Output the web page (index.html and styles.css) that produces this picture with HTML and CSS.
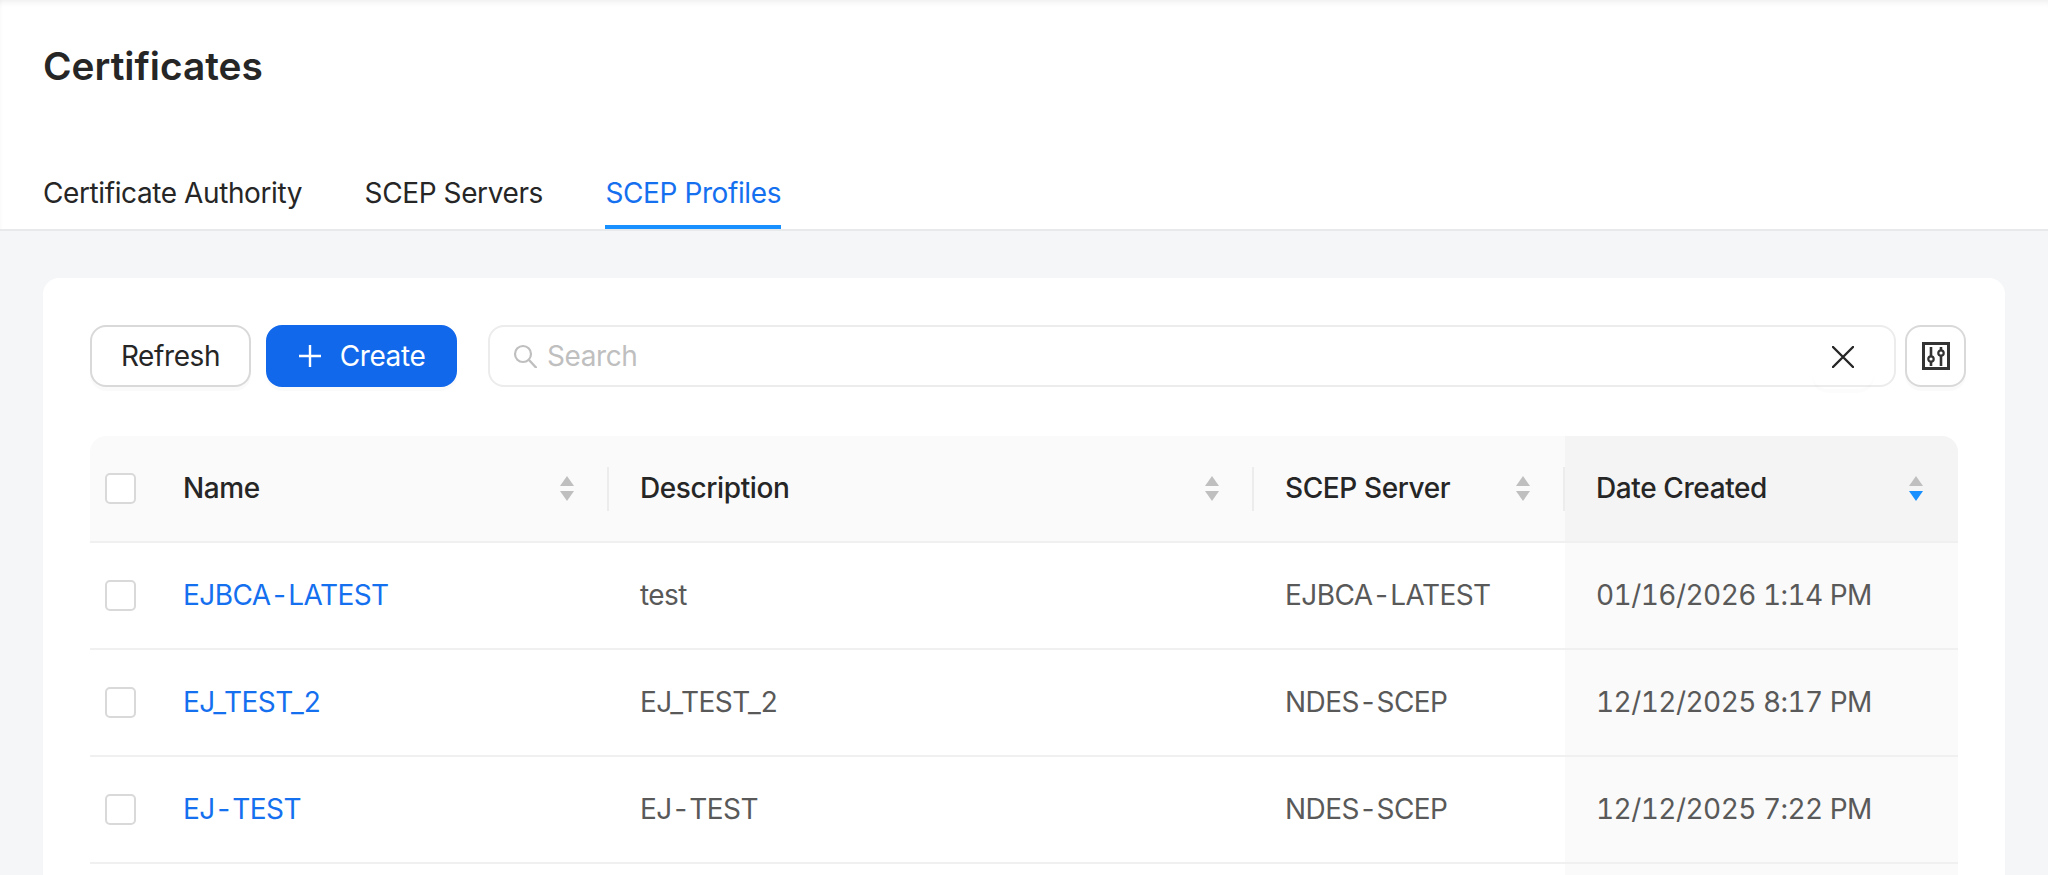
FILE: index.html
```html
<!DOCTYPE html>
<html lang="en">
<head>
<meta charset="utf-8">
<title>Certificates</title>
<link rel="stylesheet" href="styles.css">
</head>
<body>
<header class="head">
  <h1 class="title">Certificates</h1>
  <nav class="tabs">
    <a class="tab">Certificate Authority</a>
    <a class="tab">SCEP Servers</a>
    <a class="tab active">SCEP Profiles</a>
  </nav>
</header>
<main class="main">
  <section class="card">
    <div class="toolbar">
      <button class="btn">Refresh</button>
      <button class="btn primary">
        <svg class="plus" viewBox="0 0 24 24" width="24" height="24"><path d="M12 1v22M1 12h22" fill="none" stroke="#fff" stroke-width="2.4"/></svg>
        Create
      </button>
      <div class="search">
        <svg class="mag" viewBox="0 0 24 24" width="24" height="24"><circle cx="10" cy="10" r="8" fill="none" stroke="#bfbfbf" stroke-width="2.2"/><path d="M16 16l7 7.500" fill="none" stroke="#bfbfbf" stroke-width="2.4" stroke-linecap="round"/></svg>
        <span class="placeholder">Search</span>
        <span class="clear"><svg viewBox="0 0 22 22" width="22" height="22"><path d="M1 1l20 20M21 1L1 21" fill="none" stroke="#262626" stroke-width="2.4" stroke-linecap="round"/></svg></span>
      </div>
      <button class="btn icon">
        <svg viewBox="0 0 28 28" width="28" height="28"><rect x="1.500" y="1.500" width="25" height="25" fill="none" stroke="#333" stroke-width="3"/><path d="M9 5v9M9 20v4M19 5v3M19 14v10" fill="none" stroke="#333" stroke-width="2.600"/><circle cx="9" cy="17" r="2.700" fill="none" stroke="#333" stroke-width="2.200"/><circle cx="19" cy="11" r="2.700" fill="none" stroke="#333" stroke-width="2.200"/></svg>
      </button>
    </div>
    <div class="table">
      <div class="row header">
        <div class="cell select"><span class="check"></span></div>
        <div class="cell sep">Name<span class="sort"><i class="up"></i><i class="down"></i></span></div>
        <div class="cell sep">Description<span class="sort"><i class="up"></i><i class="down"></i></span></div>
        <div class="cell sep">SCEP Server<span class="sort"><i class="up"></i><i class="down"></i></span></div>
        <div class="cell date">Date Created<span class="sort"><i class="up"></i><i class="down on"></i></span></div>
      </div>
      <div class="row">
        <div class="cell select"><span class="check"></span></div>
        <div class="cell"><a class="link">EJBCA-LATEST</a></div>
        <div class="cell">test</div>
        <div class="cell">EJBCA-LATEST</div>
        <div class="cell date">01/16/2026 1:14 PM</div>
      </div>
      <div class="row">
        <div class="cell select"><span class="check"></span></div>
        <div class="cell"><a class="link">EJ_TEST_2</a></div>
        <div class="cell">EJ_TEST_2</div>
        <div class="cell">NDES-SCEP</div>
        <div class="cell date">12/12/2025 8:17 PM</div>
      </div>
      <div class="row">
        <div class="cell select"><span class="check"></span></div>
        <div class="cell"><a class="link">EJ-TEST</a></div>
        <div class="cell">EJ-TEST</div>
        <div class="cell">NDES-SCEP</div>
        <div class="cell date">12/12/2025 7:22 PM</div>
      </div>
      <div class="row">
        <div class="cell select"></div>
        <div class="cell"></div>
        <div class="cell"></div>
        <div class="cell"></div>
        <div class="cell date"></div>
      </div>
    </div>
  </section>
</main>
</body>
</html>
```
FILE: styles.css
```css
* { box-sizing: border-box; }
html, body { margin: 0; height: 875px; overflow: hidden; }
body { background: #f5f6f8; font-family: Inter, "Liberation Sans", sans-serif; color: #262626; font-size: 28px; letter-spacing: -.4px; }

.head {
  height: 231px;
  background: #fff;
  border-bottom: 2px solid #e8e9eb;
  padding: 44px 43px 0;
  box-shadow: inset 0 7px 6px -5px rgba(0,0,0,.07), inset 5px 0 5px -5px rgba(0,0,0,.04);
  display: flex;
  flex-direction: column;
  justify-content: space-between;
}
.title { margin: 0; font-size: 38.8px; line-height: 44px; font-weight: 600; color: #262626; letter-spacing: 0; }
.tabs { display: flex; gap: 62.500px; }
.tab { display: block; height: 70px; padding-top: 16px; line-height: 36px; font-size: 28px; }
.tab.active { color: #1570ef; border-bottom: 4px solid #1890ff; }

.main { padding: 47px 43px 0; }
.card { background: #fff; border-radius: 16px 16px 0 0; padding: 47px 39px 0 47px; height: 620px; }

.toolbar { display: flex; align-items: stretch; height: 62px; }
.btn {
  font: inherit; letter-spacing: inherit; font-size: 28px; color: #262626; background: #fff;
  border: 2px solid #d9d9d9; border-radius: 16px; padding: 0; height: 62px; width: 161px;
  box-shadow: 0 4px 0 rgba(0,0,0,.02);
  display: flex; align-items: center; justify-content: center;
}
.btn.primary { margin-left: 15px; width: 191px; background: #1268eb; border-color: #1268eb; color: #fff; gap: 18px; }
.btn.icon { margin-left: 9px; width: 61px; }
.search {
  position: relative; flex: 1; margin-left: 31px; height: 62px;
  border: 2px solid #ececec; border-radius: 16px; background: #fff;
  display: flex; align-items: center; padding-left: 23px; gap: 10px;
}
.placeholder { color: #bfbfbf; }
.clear {
  position: absolute; right: 20px; top: 0; width: 62px; height: 62px;
  border-radius: 16px; box-shadow: 0 4px 0 rgba(0,0,0,.012);
  display: flex; align-items: center; justify-content: center; padding-bottom: 2px;
}

.table { margin: 49px 8px 0 0; }
.row { display: grid; grid-template-columns: 70px 449px 645px 311px 393px; height: 107px; border-bottom: 2px solid #f0f0f0; color: #595959; font-variant-numeric: tabular-nums; letter-spacing: -.55px; }
.row.header { height: 107px; background: #fafafa; border-radius: 16px 16px 0 0; color: #262626; font-weight: 500; letter-spacing: -.4px; }
.cell { position: relative; display: flex; align-items: center; padding-left: 31px; padding-bottom: 2px; }
.row > .cell:nth-child(2) { padding-left: 23px; }
.cell.select { padding: 0 0 0 15px; }
.cell.date { background: #fafafa; }
.header .cell.date { background: #f4f4f4; border-top-right-radius: 16px; }
.link { color: #1570ef; }
.check { width: 31px; height: 31px; border: 2px solid #d9d9d9; border-radius: 5px; background: #fff; }
.sep::after { content: ""; position: absolute; right: 0; top: 31px; height: 44px; width: 2px; background: #ececec; }
.sort { position: absolute; right: 35px; top: 40px; width: 14px; display: flex; flex-direction: column; gap: 5px; }
.sort i { display: block; width: 14px; height: 10px; background: #bfbfbf; }
.sort .up { clip-path: polygon(50% 0, 100% 100%, 0 100%); }
.sort .down { clip-path: polygon(0 0, 100% 0, 50% 100%); }
.sort .on { background: #1890ff; }
```
